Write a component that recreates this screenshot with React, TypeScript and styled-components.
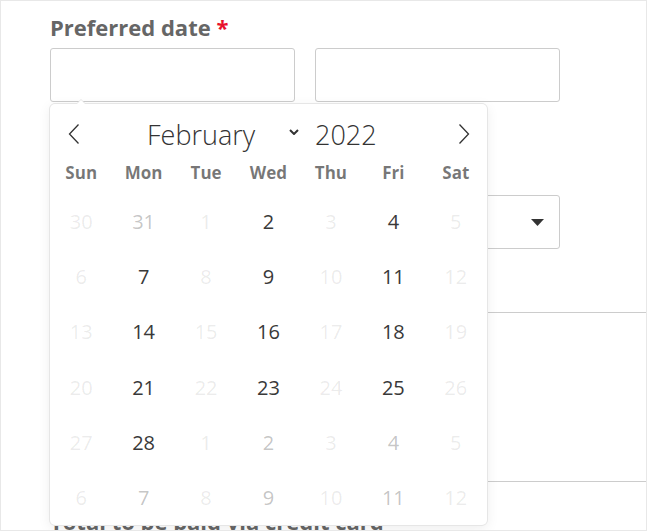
import React from 'react'
import styled, { createGlobalStyle, css } from 'styled-components'

const GlobalStyle = createGlobalStyle`
  html, body {
    margin: 0;
    padding: 0;
    background: #fff;
  }
  body {
    font-family: "Open Sans", "Liberation Sans", Arial, sans-serif;
  }
  * {
    box-sizing: border-box;
  }
`

const Frame = styled.div`
  position: relative;
  width: 647px;
  height: 531px;
  overflow: hidden;
  padding: 11px 0 0 49px;
  background: #fff;
  border: 1px solid #e8e8e8;
`

const FormColumn = styled.div`
  width: 510px;
`

const Label = styled.div<{ $gap?: number }>`
  margin-top: ${({ $gap }) => $gap || 0}px;
  font-size: 22px;
  line-height: 30px;
  font-weight: 700;
  color: #666;
  white-space: nowrap;
`

const Required = styled.span`
  color: #e8112d;
`

const DateRow = styled.div`
  display: grid;
  grid-template-columns: 245px 245px;
  gap: 20px;
  margin-top: 6px;
`

const InputWrap = styled.div`
  position: relative;
`

const TextInput = styled.div`
  height: 54px;
  background: #fff;
  border: 1px solid #ccc;
  border-radius: 3px;
`

const SelectBox = styled.div`
  display: flex;
  align-items: center;
  justify-content: flex-end;
  height: 54px;
  margin-top: 6px;
  padding-right: 15px;
  border: 1px solid #ccc;
  border-radius: 3px;
`

const Divider = styled.div<{ $gap: number }>`
  height: 1px;
  margin-top: ${({ $gap }) => $gap}px;
  background: #ccc;
`

const Section = styled.div`
  height: 168px;
`

const Popup = styled.div`
  position: absolute;
  top: calc(100% + 2px);
  left: 0;
  z-index: 10;
  width: 437px;
  background: #fff;
  border-radius: 5px;
  box-shadow: 1px 0 0 #e6e6e6, -1px 0 0 #e6e6e6, 0 1px 0 #e6e6e6, 0 -1px 0 #e6e6e6,
    0 3px 13px rgba(0, 0, 0, 0.08);

  &::before,
  &::after {
    content: '';
    position: absolute;
    bottom: 100%;
    height: 0;
    width: 0;
    border: solid transparent;
  }
  &::before {
    left: 26px;
    border-width: 5px;
    border-bottom-color: #e6e6e6;
  }
  &::after {
    left: 27px;
    border-width: 4px;
    border-bottom-color: #fff;
  }
`

const Header = styled.div`
  display: flex;
  align-items: center;
  height: 60px;
  padding: 0 17px 0 18px;
  color: #333;
`

const NavArrow = styled.svg<{ $next?: boolean }>`
  flex-shrink: 0;
  ${({ $next }) =>
    $next &&
    css`
      margin-left: auto;
    `}
`

const MonthSelect = styled.div`
  display: flex;
  align-items: center;
  justify-content: space-between;
  width: 154px;
  margin-left: 67px;
  font-size: 27px;
  font-weight: 300;
  white-space: nowrap;

  svg {
    margin: 0 2px 5px 0;
  }
`

const YearLabel = styled.div`
  margin-left: 14px;
  font-size: 27px;
  font-weight: 300;
`

const Weekdays = styled.div`
  display: grid;
  grid-template-columns: repeat(7, 1fr);
  height: 18px;
  line-height: 18px;
  font-size: 17px;
  font-weight: 700;
  text-align: center;
  color: rgba(0, 0, 0, 0.54);
`

const DaysGrid = styled.div`
  display: grid;
  grid-template-columns: repeat(7, 1fr);
  grid-auto-rows: 55.2px;
  align-items: center;
  margin-top: 12px;
  font-size: 20px;
  text-align: center;
`

type Tone = 'active' | 'muted' | 'disabled'

const TONES: Record<Tone, string> = {
  active: '#393939',
  muted: 'rgba(57, 57, 57, 0.3)',
  disabled: 'rgba(57, 57, 57, 0.1)'
}

const Day = styled.span<{ $tone: Tone }>`
  color: ${({ $tone }) => TONES[$tone]};
`

const WEEKDAYS = ['Sun', 'Mon', 'Tue', 'Wed', 'Thu', 'Fri', 'Sat']

// Feb 2022 starts on a Tuesday; only Mon / Wed / Fri can be picked
const buildDays = () => {
  const cells: { n: number; tone: Tone }[] = []
  for (let i = 0; i < 42; i++) {
    const offset = i - 2
    let n = offset + 1
    let inMonth = true
    if (offset < 0) {
      n = 31 + offset + 1
      inMonth = false
    } else if (offset >= 28) {
      n = offset - 28 + 1
      inMonth = false
    }
    const col = i % 7
    const enabled = col === 1 || col === 3 || col === 5
    const tone: Tone = !enabled ? 'disabled' : inMonth ? 'active' : 'muted'
    cells.push({ n, tone })
  }
  return cells
}

const DAYS = buildDays()

const Chevron = ({ next }: { next?: boolean }) => (
  <NavArrow $next={next} width="12" height="22" viewBox="0 0 12 22">
    <polyline
      points={next ? '1.5,1.5 10.5,11 1.5,20.5' : '10.5,1.5 1.5,11 10.5,20.5'}
      fill="none"
      stroke="#333"
      strokeWidth="1.3"
    />
  </NavArrow>
)

const DatePicker = () => (
  <Popup>
    <Header>
      <Chevron />
      <MonthSelect>
        <span>February</span>
        <svg width="10" height="6" viewBox="0 0 10 6">
          <polyline points="1,1 5,5 9,1" fill="none" stroke="#333" strokeWidth="2" />
        </svg>
      </MonthSelect>
      <YearLabel>2022</YearLabel>
      <Chevron next />
    </Header>
    <Weekdays>
      {WEEKDAYS.map((d) => (
        <span key={d}>{d}</span>
      ))}
    </Weekdays>
    <DaysGrid>
      {DAYS.map((d, i) => (
        <Day key={i} $tone={d.tone}>
          {d.n}
        </Day>
      ))}
    </DaysGrid>
  </Popup>
)

export default function App() {
  return (
    <>
      <GlobalStyle />
      <Frame>
        <FormColumn>
          <Label>
            Preferred date <Required>*</Required>
          </Label>
          <DateRow>
            <InputWrap>
              <TextInput />
              <DatePicker />
            </InputWrap>
            <TextInput />
          </DateRow>
          <Label $gap={57}>Preferred time</Label>
          <SelectBox>
            <svg width="13" height="7" viewBox="0 0 13 7">
              <polygon points="0,0 13,0 6.5,7" fill="#333" />
            </svg>
          </SelectBox>
        </FormColumn>
        <Divider $gap={63} />
        <Section />
        <Divider $gap={0} />
        <Label $gap={24}>Total to be paid via credit card</Label>
      </Frame>
    </>
  )
}
